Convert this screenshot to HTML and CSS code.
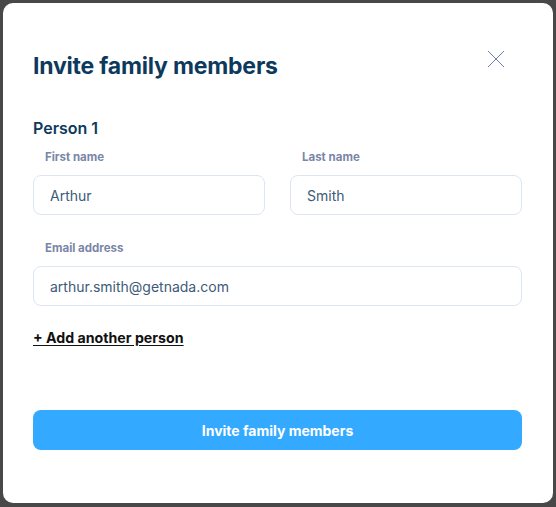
FILE: index.html
```html
<!DOCTYPE html>
<html lang="en">
<head>
  <meta charset="UTF-8" />
  <meta name="viewport" content="width=device-width, initial-scale=1.0" />
  <title>Invite family members</title>
  <link rel="stylesheet" href="styles.css">
</head>
<body>
  <div class="modal">
    <div class="modal-head">
      <h1>Invite family members</h1>
      <button class="close" aria-label="Close">
        <svg width="18" height="18" viewBox="0 0 18 18">
          <path d="M1 1 L17 17 M17 1 L1 17" stroke="#6b7db3" stroke-width="1" fill="none" />
        </svg>
      </button>
    </div>

    <h2>Person 1</h2>
    <div class="row">
      <div class="field">
        <label>First name</label>
        <div class="input">Arthur</div>
      </div>
      <div class="field">
        <label>Last name</label>
        <div class="input">Smith</div>
      </div>
    </div>
    <div class="field email">
      <label>Email address</label>
      <div class="input">arthur.smith@getnada.com</div>
    </div>

    <a href="#" class="add-link">+ Add another person</a>

    <button class="submit">Invite family members</button>
  </div>
</body>
</html>
```

FILE: styles.css
```css
body {
  margin: 0;
  background-color: #484848;
  font-family: 'Inter', 'Noto Sans', sans-serif;
}

.modal {
  box-sizing: border-box;
  width: 550px;
  height: 500px;
  margin: 3px;
  background: white;
  border-radius: 10px;
  padding: 48px 31px 0 30px;
  display: flex;
  flex-direction: column;
}

.modal-head {
  display: flex;
  justify-content: space-between;
  align-items: flex-start;
}

h1 {
  margin: 0;
  font-size: 23px;
  line-height: 30px;
  font-weight: 700;
  color: #0d3a5c;
  letter-spacing: -0.2px;
}

.close {
  background: none;
  border: none;
  padding: 0;
  margin: -1px 17px 0 0;
  width: 18px;
  height: 18px;
  cursor: pointer;
}

h2 {
  margin: 37px 0 0;
  font-size: 16px;
  line-height: 20px;
  font-weight: 600;
  color: #0d3a5c;
}

.row {
  display: flex;
  gap: 25px;
  margin-top: 11px;
}

.field {
  flex: 1;
}

.field label {
  display: block;
  font-size: 11.5px;
  line-height: 16px;
  font-weight: 700;
  color: #7a86a8;
  padding-left: 12px;
  margin-bottom: 10px;
}

.input {
  box-sizing: border-box;
  height: 40px;
  border: 1px solid #dce5f1;
  border-radius: 8px;
  padding: 0 16px;
  display: flex;
  align-items: center;
  font-size: 14px;
  color: #3d5a79;
}

.email {
  margin-top: 25px;
  flex: none;
}

.add-link {
  align-self: flex-start;
  margin-top: 22px;
  font-size: 14.2px;
  line-height: 20px;
  font-weight: 700;
  color: #111;
  text-decoration: underline;
  text-underline-offset: 2px;
}

.submit {
  margin-top: 62px;
  height: 40px;
  border: none;
  border-radius: 8px;
  background: #33a9ff;
  color: white;
  font-family: inherit;
  font-size: 14px;
  font-weight: 700;
  cursor: pointer;
}
```
